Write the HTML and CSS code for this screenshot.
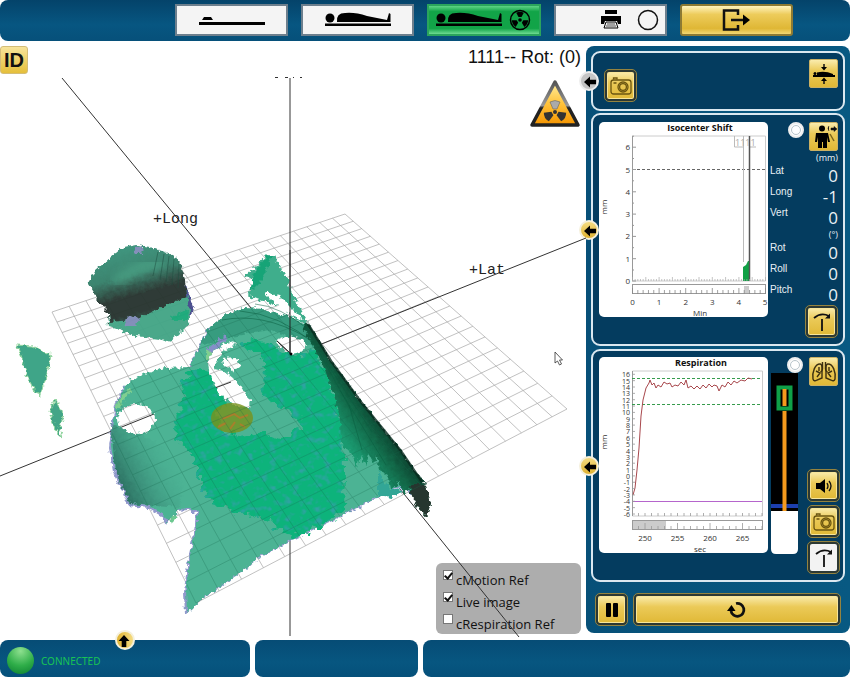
FILE: index.html
```html
<!DOCTYPE html>
<html lang="en">
<head>
<meta charset="utf-8">
<title>Surface monitoring</title>
<link rel="stylesheet" href="styles.css">
</head>
<body>
<svg class="defs" width="0" height="0" aria-hidden="true">
  <symbol id="camera" viewBox="0 0 24 24"><g fill="none" stroke="#6b5510" stroke-width="1.3"><rect x="2" y="6" width="20" height="14" rx="2.5"/><circle cx="14" cy="13" r="5"/><circle cx="14" cy="13" r="3.4"/><path d="M4.500 5.500V4H8v1.500M4.500 9h3"/></g></symbol>
  <symbol id="tilt" viewBox="0 0 24 24"><path d="M4 8Q11 2 19 6M12 9v12" fill="none" stroke="#111" stroke-width="1.800"/><path d="M20 3.500v5h-5z" fill="#111"/></symbol>
  <symbol id="arrow" viewBox="0 0 18 18"><path d="M3 9l6-5.500v3.200h6v4.600H9v3.200z" fill="#000"/></symbol>
  <symbol id="patient" viewBox="0 0 66 16"><circle cx="5" cy="6" r="4.500"/><path d="M12 10Q11 1 20 1Q30 0 42 4L62 8L64 1L65.500 2V10z"/><rect x="0" y="11.500" width="66" height="2.500"/></symbol>
</svg>

<header class="topbar">
  <nav class="steps" aria-label="Workflow">
    <button class="step" aria-label="Empty couch"><svg width="66" height="16" viewBox="0 0 66 16"><path d="M3 8l2-3h7l2 3z"/><rect y="10" width="66" height="3"/></svg></button>
    <button class="step" aria-label="Positioning"><svg width="66" height="16"><use href="#patient"/></svg></button>
    <button class="step step-active" aria-label="Treatment">
      <svg width="66" height="16"><use href="#patient"/></svg>
      <svg width="22" height="22" viewBox="-11 -11 22 22"><circle r="9.500" fill="none" stroke="#000" stroke-width="1.500"/><circle r="1.800"/><g id="blades"><path id="blade" d="M-1.500 -3L-3.800 -7.200Q0 -9.200 3.800 -7.200L1.500 -3z"/><use href="#blade" transform="rotate(120)"/><use href="#blade" transform="rotate(240)"/></g></svg>
    </button>
    <button class="step step-print" aria-label="Report">
      <svg width="22" height="20" viewBox="0 0 22 20"><path d="M5 0h12v4H5zM1 6h20v8h-3l-1-3H5l-1 3H1z"/><path d="M6 12h10l2 6H4z" fill="#eee" stroke="#000"/><path d="M7 14h8M6 16h10" stroke="#555"/></svg>
      <svg width="22" height="22" viewBox="0 0 22 22"><circle cx="11" cy="11" r="9.500" fill="none" stroke="#111" stroke-width="1.500"/></svg>
    </button>
    <button class="step step-gold" aria-label="Exit"><svg width="28" height="22" viewBox="0 0 28 22"><path d="M16 6V1.500H2v19h14V16M9 11h15" fill="none" stroke="#111" stroke-width="2.500"/><path d="M21 5.500l7 5.500-7 5.500z"/></svg></button>
  </nav>
</header>

<main class="work">
  <section class="scene" aria-label="Surface view">
    <svg class="canvas" viewBox="0 42 586 598">
      <defs>
        <filter id="jag" color-interpolation-filters="sRGB" x="-5%" y="-5%" width="110%" height="110%"><feTurbulence type="fractalNoise" baseFrequency=".22" numOctaves="2" seed="4"/><feDisplacementMap in="SourceGraphic" scale="7" xChannelSelector="R" yChannelSelector="G"/></filter>
        <filter id="mottle" color-interpolation-filters="sRGB" x="-5%" y="-5%" width="110%" height="110%">
          <feTurbulence type="fractalNoise" baseFrequency=".13 .16" numOctaves="2" seed="9" result="n"/>
          <feDisplacementMap in="SourceGraphic" in2="n" scale="16" xChannelSelector="R" yChannelSelector="G" result="s"/>
          <feColorMatrix in="n" values="0 0 0 0 .18  0 0 0 0 .64  0 0 0 0 .63  3.500 0 0 0 -1.800" result="b"/>
          <feComposite in="b" in2="s" operator="in" result="c"/>
          <feMerge><feMergeNode in="s"/><feMergeNode in="c"/></feMerge>
        </filter>
        <filter id="soft"><feGaussianBlur stdDeviation="5"/></filter>
        <linearGradient id="head" gradientUnits="userSpaceOnUse" x1="128" y1="245" x2="150" y2="326"><stop offset="0" stop-color="#39927a"/><stop offset=".35" stop-color="#35806a"/><stop offset=".6" stop-color="#27342f"/><stop offset=".8" stop-color="#27342f"/><stop offset="1" stop-color="#32685a"/></linearGradient>
        <linearGradient id="flank" gradientUnits="userSpaceOnUse" x1="345" y1="440" x2="385" y2="412"><stop offset="0" stop-color="#1a9a70"/><stop offset=".5" stop-color="#126848"/><stop offset="1" stop-color="#0a3023"/></linearGradient>
        <linearGradient id="side" gradientUnits="userSpaceOnUse" x1="118" y1="480" x2="175" y2="450"><stop offset="0" stop-color="#2d7263"/><stop offset="1" stop-color="#4ab396" stop-opacity="0"/></linearGradient>
        <mask id="holes" maskUnits="userSpaceOnUse" x="0" y="42" width="586" height="598">
          <rect y="42" width="586" height="598" fill="#fff"/>
          <g filter="url(#jag)">
            <ellipse cx="136" cy="419" rx="19" ry="15"/>
            <path d="M276 341L289 336L302 339L307 346L300 352L291 354L283 350z"/>
            <path d="M208 363Q211 346 234 341L236 344Q222 351 217 360L214 369L224 371L238 382L250 400L249 407L235 406L217 391L210 375z"/>
            <path d="M222 359L236 358L240 367L234 371L223 365z"/>
          </g>
        </mask>
        <path id="torso" d="M190 367L200 345L210 327L225 315L243 308L262 309L285 315L308 326L330 360L360 401L400 450L425 485L420 494L400 486L385 492L360 506L325 523L290 540L260 557L230 580L205 597L187 613L186 590L190 555L196 530L198 511L190 508L180 509L172 516L168 522L163 514L150 506L130 504L125 490L115 470L111 445L114 420L118 400L125 385L140 375L165 368z"/>
      </defs>

      <g id="grid" stroke="#a6a6a6" stroke-width=".7"></g>
      <g stroke="#333" stroke-width="1">
        <path d="M0 476L154 414M319 345L586 238M62 78L256 314M277 341L292 355M400 489L519 637M290 78V354M290 538V636M215 388L231 382"/>
        <path d="M275 77.500h3M285 77.500h3M293 77.500h1M300 77.500h2"/>
      </g>

      <g filter="url(#jag)" opacity=".96">
        <path d="M184 280L195 312L189 316L180 296z" fill="#45498c"/>
        <path d="M108 312L186 290L190 310L188 325L178 335L169 343L160 339L135 336L122 331L109 327z" fill="#43a586"/>
        <path d="M88 283L96 270L110 258L122 248L137 245L150 247L165 252L176 257L182 268L185 280L187 296L165 306L135 320L109 322L108 312L98 302L95 294z" fill="url(#head)"/>
        <path d="M124 322L131 315L139 317L136 326L126 326zM134 247L142 246L143 254L136 254z" fill="#7f8bb8"/>
        <path d="M171 318L188 308L187 320L172 320z" fill="#18a878"/>
        <path d="M17 345L33 346L51 355L48 370L41 395L35 393L25 370L22 358z" fill="#38a284" stroke="#8fd49a"/>
        <path d="M55 399L62 410L63 420L59 428L62 438L57 434L50 415z" fill="#3ca283" stroke="#8fd49a"/>
      </g>
      <path d="M115 283Q138 264 162 264" fill="none" stroke="#55b795" stroke-width="10" filter="url(#soft)" opacity=".5"/>
      <path d="M158 252l-5 24M164 254l-4 26M169 256l-3 26M174 259l-2 26M179 264l-1 24" fill="none" stroke="#1e4d40" opacity=".5"/>

      <g filter="url(#jag)">
        <path d="M244 277L256 266L268 255L274 256L286 276L293 296L310 326L296 320L281 307L262 301L247 295L257 279z" fill="#3fae8c"/>
        <path d="M257 268L268 256L272 256L262 280L251 291L252 281z" fill="#16a477"/>
        <path d="M264 292L279 296L291 308L304 321L291 315L278 306z" fill="#fff"/>
      </g>
      <g mask="url(#holes)">
        <g filter="url(#jag)">
          <use href="#torso" x="-2" y="2" fill="#9199cc"/>
          <path d="M165 509L178 517L171 524z" fill="#6cc890"/>
          <use href="#torso" fill="#4cb394"/>
          <path d="M111 425L150 438L185 465L180 508L130 504L115 470z" fill="url(#side)"/>
          <path d="M200 345L210 327L225 315L243 308L262 309L290 317L312 330L320 350L270 330L225 338z" fill="#2f9376" opacity=".7"/>
          <path d="M118 408Q121 396 131 390M208 360Q207 349 225 339" fill="none" stroke="#7fcf90" stroke-width="4"/>
          <path d="M209 351L226 337" stroke="#858fc8" stroke-width="5"/>
        </g>
        <path filter="url(#mottle)" fill="#0db37b" d="M183 378L200 369L212 374L217 390L226 402L216 412L218 430L240 436L262 433L280 440L302 426L298 418L280 406L262 396L266 375L262 357L240 345L252 339L272 344L284 354L304 355L316 351L326 375L336 400L344 430L345 470L344 510L330 521L292 538L278 530L268 520L240 514L214 504L202 485L194 460L190 452L174 440L176 420L182 400z"/>
      </g>
      <g filter="url(#jag)">
        <path d="M308 322L330 359L360 400L400 449L425 484L431 503L427 517L418 508L409 488L404 496L399 480L392 494L388 474L379 470L377 454L374 464L369 454L366 466L360 456L357 468L350 450L341 446L340 420L335 398L325 370L314 348L303 328z" fill="url(#flank)"/>
        <path d="M410 484L425 484L431 503L427 517L418 508L412 496z" fill="#26362f"/>
        <path d="M378 470L390 490L402 488L392 498L378 496z" fill="#32a696"/>
      </g>
      <path d="M308 324L331 361L361 402L401 451L422 482" fill="none" stroke="#082a1e" stroke-width="2.500" opacity=".8"/>
      <path d="M318 350L352 412M326 362L372 432M335 372L392 450M340 390L386 465M349 405L362 450M255 304Q280 306 309 330M240 311Q280 314 316 345M222 320Q262 312 306 337" fill="none" stroke="#075b3e" opacity=".5"/>
      <ellipse cx="232" cy="418" rx="21" ry="15" fill="#78921c" opacity=".8"/>
      <path d="M222 419l12-5 6 4 8-3M235 422l-5 7M218 427l8-4M240 424l5 3" stroke="#c17429" fill="none" stroke-width="2" opacity=".7"/>
      <clipPath id="torsoClip"><use href="#torso"/></clipPath>
      <g mask="url(#holes)"><g id="mesh" stroke="#18684f" stroke-width=".7" opacity=".4" clip-path="url(#torsoClip)"></g></g>
      <path d="M290 250V354M277 341L292 355" stroke="#222"/>
      <circle cx="291" cy="354" r="1.500"/>
      <g class="axis-label"><text x="153" y="223">+Long</text><text x="469" y="274">+Lat</text></g>
      <path d="M555 352v11l2.500-2 2 4 2-1-2-4h3z" fill="#fff" stroke="#333" stroke-width=".8"/>
    </svg>

    <div class="overlay">
      <div class="scene-top">
        <button class="id-button">ID</button>
        <div class="status">
          <h1 class="reading">1111-- Rot: (0)</h1>
          <svg class="warning" width="52" height="50" viewBox="0 0 52 50" role="img" aria-label="Radiation"><defs><linearGradient id="warn" x1="0" y1="0" x2="0" y2="1"><stop offset="0" stop-color="#fff0a0"/><stop offset=".5" stop-color="#ffc33c"/><stop offset="1" stop-color="#f49400"/></linearGradient><linearGradient id="rim" x1="0" y1="0" x2="0" y2="1"><stop offset="0" stop-color="#555"/><stop offset=".55" stop-color="#999"/><stop offset=".6" stop-color="#222"/><stop offset="1" stop-color="#222"/></linearGradient></defs><path d="M26 3L49 46H3z" fill="url(#warn)" stroke="url(#rim)" stroke-width="3.500" stroke-linejoin="round"/><g transform="translate(26 33)" fill="#333"><circle r="2"/><path d="M-2-3L-5-10Q0-13 5-10L2-3z" fill="#aaa" stroke="#555" stroke-width=".5"/><path d="M-2-3L-5-10Q0-13 5-10L2-3z" transform="rotate(120)"/><path d="M-2-3L-5-10Q0-13 5-10L2-3z" transform="rotate(240)"/></g></svg>
        </div>
      </div>
      <fieldset class="layers">
        <label><input type="checkbox" checked>cMotion Ref</label>
        <label><input type="checkbox" checked>Live image</label>
        <label><input type="checkbox">cRespiration Ref</label>
      </fieldset>
    </div>
  </section>

  <aside class="panel">
    <section class="box box-capture">
      <button class="round round-grey" aria-label="Collapse capture"><svg width="18" height="18"><use href="#arrow"/></svg></button>
      <button class="icon framed" aria-label="Capture"><svg width="24" height="24"><use href="#camera"/></svg></button>
      <button class="icon" aria-label="Couch height"><svg width="26" height="26" viewBox="0 0 26 26"><path d="M2 14h22v2H2zM6 11.500q8-2 16 1.500v1H6z"/><circle cx="4" cy="12.500" r="1.500"/><path d="M13 3v5M13 23v-5" stroke="#111" stroke-width="1.500"/><path d="M10 6h6l-3 3.500zM10 20h6l-3-3.500z"/></svg></button>
    </section>

    <section class="box box-shift">
      <button class="round" aria-label="Collapse shift"><svg width="18" height="18"><use href="#arrow"/></svg></button>
      <figure class="card">
        <svg class="chart" id="shift" viewBox="599 122 169 195" role="img" aria-label="Isocenter shift">
          <text class="title" x="700" y="131">Isocenter Shift</text>
          <path d="M632.500 136V281H765.500V136z" fill="none" stroke="#ccc"/>
          <path d="M632.500 136V281" stroke="#999"/>
          <path d="M632 169.500H765" stroke="#666" stroke-dasharray="3 2"/>
          <path d="M743.500 136V262M734.500 136V147H743M749.500 136V147H756" stroke="#bbb" fill="none"/>
          <path d="M743 281V267L746 265L748 261H750V281z" fill="#11a045"/>
          <path d="M749.500 136V281" stroke="#555" stroke-width="1.500"/>
          <text class="ghost" x="735" y="146">1111</text>
          <rect x="632.500" y="284.500" width="133" height="9" fill="#fff" stroke="#999"/>
          <rect x="744" y="286" width="5" height="7" fill="#ccc"/>
          <g class="ticks"></g>
          <text x="700" y="316">Min</text>
          <text class="unit" transform="translate(607 207) rotate(-90)">mm</text>
        </svg>
      </figure>
      <div class="shift-side">
        <div class="pick"><input class="dot" type="radio" name="source" aria-label="Track isocenter"><button class="icon" aria-label="Patient motion"><svg width="26" height="26" viewBox="0 0 26 26"><circle cx="11" cy="4.500" r="3"/><path d="M5 9h12l2 9h-2l-1-5v11h-4v-6h-1v6H7V13l-1 5H4z"/><path d="M18 2q-2 2 0 5M23 2.500l3 2.500-3 2.500zM20 4v2h3V4z" stroke="#111" fill="#111" stroke-width=".5"/><path d="M19 10l4 7" stroke="#7a631b" stroke-width="1.500"/></svg></button></div>
        <table class="values">
          <tbody>
            <tr class="unit-row"><th></th><td>(mm)</td></tr>
            <tr><th scope="row">Lat</th><td>0</td></tr>
            <tr><th scope="row">Long</th><td>-1</td></tr>
            <tr><th scope="row">Vert</th><td>0</td></tr>
            <tr class="unit-row"><th></th><td>(°)</td></tr>
            <tr><th scope="row">Rot</th><td>0</td></tr>
            <tr><th scope="row">Roll</th><td>0</td></tr>
            <tr><th scope="row">Pitch</th><td>0</td></tr>
          </tbody>
        </table>
        <button class="icon framed" aria-label="Apply shift"><svg width="24" height="24"><use href="#tilt"/></svg></button>
      </div>
    </section>

    <section class="box box-resp">
      <button class="round" aria-label="Collapse respiration"><svg width="18" height="18"><use href="#arrow"/></svg></button>
      <figure class="card">
        <svg class="chart" id="resp" viewBox="599 357 169 196" role="img" aria-label="Respiration">
          <text class="title" x="701" y="366">Respiration</text>
          <path d="M632.500 371V516H762.500V371z" fill="none" stroke="#ccc"/>
          <path d="M632.500 371V516" stroke="#999"/>
          <path d="M632 378.500H762M632 404.500H762" stroke="#369b4d" stroke-dasharray="3 2"/>
          <path d="M633 501.500H762" stroke="#b565cc"/>
          <path d="M633 495L635 488L637 470L639 448L641 416L643 400L646 388L649 383L650 380L652 385L654 383L656 388L658 385L661 387L664 382L667 384L670 383L672 387L675 385L678 386L681 382L684 385L686 380L688 388L691 386L694 389L697 386L700 389L703 385L706 388L709 384L712 387L714 385L717 386L719 391L722 385L725 387L728 382L731 385L734 381L737 383L741 380L745 381L748 378L752 379" fill="none" stroke="#a8474c" stroke-linejoin="round"/>
          <rect x="632.500" y="520.500" width="130" height="9" fill="#fff" stroke="#999"/>
          <rect x="633" y="521" width="33" height="8" fill="#ccc"/>
          <g class="ticks"></g>
          <text x="700" y="552">sec</text>
          <text class="unit" transform="translate(607 442) rotate(-90)">mm</text>
        </svg>
      </figure>
      <div class="gauge-col">
        <input class="dot" type="radio" name="source" aria-label="Track respiration">
        <svg class="gauge" width="27" height="181" viewBox="0 0 27 181" role="img" aria-label="Respiration level"><path d="M0 0H27V138H0z"/><path d="M0 138H27V176Q27 181 22 181H5Q0 181 0 176z" fill="#fff"/><rect y="131" width="27" height="4" fill="#1c3fae"/><rect x="7.500" y="14.500" width="12" height="21" fill="#000" stroke="#0fa048" stroke-width="4"/><path d="M13.500 16V33M13.500 38V138" stroke="#f59a1d" stroke-width="4"/></svg>
      </div>
      <div class="resp-side">
        <button class="icon" aria-label="Respiration"><svg width="26" height="26" viewBox="0 0 26 26"><g fill="none" stroke="#3c3010" stroke-width="1.400"><path d="M11.500 3v7q0 2-2 3M14.500 3v7q0 2 2 3"/><path d="M9 5C4 5 1 13 2 20q1 3 4 1l5-2V9q0-4-2-4zM17 5c5 0 8 8 7 15q-1 3-4 1l-5-2V9q0-4 2-4z"/><path d="M5 12l4 2-3 4M8 8v4M21 12l-4 2 3 4M18 8v4"/></g></svg></button>
        <button class="icon framed" aria-label="Sound"><svg width="20" height="20" viewBox="0 0 20 20"><path d="M2 7h4l5-4v14l-5-4H2z"/><path d="M13 7q2 3 0 6M15 5q4 5 0 10" fill="none" stroke="#111" stroke-width="1.300"/></svg></button>
        <button class="icon framed" aria-label="Capture breathing"><svg width="24" height="24"><use href="#camera"/></svg></button>
        <button class="icon framed icon-white" aria-label="Reset baseline"><svg width="24" height="24"><use href="#tilt"/></svg></button>
      </div>
    </section>

    <div class="actions">
      <button class="icon framed" aria-label="Pause"><svg width="14" height="14" viewBox="0 0 14 14"><rect x="1" width="5" height="14" rx="1"/><rect x="8" width="5" height="14" rx="1"/></svg></button>
      <button class="icon framed restart" aria-label="Restart"><svg width="20" height="20" viewBox="0 0 20 20"><path d="M9 3.500A6.500 6.500 0 1 1 4 11" fill="none" stroke="#111" stroke-width="2.800"/><path d="M0 11l4.500-6 4 6z"/></svg></button>
    </div>
  </aside>
</main>

<footer class="bottombar">
  <section class="bar bar-status"><button class="round round-up" aria-label="Expand"><svg width="18" height="18"><use href="#arrow"/></svg></button><span class="lamp"></span><span class="state">CONNECTED</span></section>
  <section class="bar"></section>
  <section class="bar"></section>
</footer>
<script src="plot.js"></script>
</body>
</html>
```
FILE: styles.css
```css
* { box-sizing: border-box; }
body {
  margin: 0;
  min-height: 100vh;
  display: flex;
  flex-direction: column;
  background: #fff;
  font-family: "Open Sans", "Noto Sans", sans-serif;
  color: #111;
}
button { padding: 0; font: inherit; color: inherit; cursor: pointer; }
svg { display: block; flex: none; }
.defs { position: absolute; }

.topbar {
  height: 41px;
  padding: 4px 57px 5px 175px;
  border-radius: 8px;
  background: linear-gradient(#04436a, #075681 60%, #06507a);
}
.steps { display: grid; grid-template-columns: repeat(5, minmax(0, 1fr)); gap: 13px; height: 100%; }
.step {
  display: flex;
  align-items: center;
  justify-content: center;
  gap: 7px;
  border: 2px solid #6d7f8d;
  background: #f4f4f4;
}
.step-active { border-color: #2ba45c; background: linear-gradient(#5ed286, #12a448 20%, #12a448 80%, #6edb92); }
.step-print { justify-content: flex-end; gap: 15px; padding-right: 6px; }
.step-gold { border-color: #8d7a33; border-radius: 3px; background: linear-gradient(#fff3bd, #edcc5b 30%, #dfb735 80%, #f2d774); }

.work { flex: 1; display: grid; grid-template-columns: minmax(0, 1fr) 264px; align-items: start; }
.scene { display: grid; margin-top: 1px; }
.canvas, .overlay { grid-area: 1 / 1; }
.canvas { width: 100%; z-index: 1; pointer-events: none; }
.axis-label { font: 15px "Liberation Mono", monospace; fill: #222; }
.overlay { display: flex; flex-direction: column; justify-content: space-between; align-items: flex-end; padding: 4px 5px 6px 0; }
.scene-top { display: flex; justify-content: space-between; align-self: stretch; }
.id-button {
  width: 28px;
  height: 28px;
  border: 1px solid #d3bd78;
  border-radius: 3px;
  background: linear-gradient(#f7e49b, #e5bf3a);
  font: bold 20px/24px "Liberation Sans", sans-serif;
}
.status { display: flex; flex-direction: column; align-items: flex-end; gap: 11px; }
.reading { margin: 0; font: 18px/22px "Liberation Sans", sans-serif; }
.layers {
  display: flex;
  flex-direction: column;
  width: 145px;
  margin: 0;
  padding: 5px 7px 0;
  border: 0;
  border-radius: 6px;
  background: #adadad;
  font-size: 13px;
  line-height: 22px;
}
.layers label { display: flex; gap: 3px; height: 22px; padding-top: 1px; white-space: nowrap; }
.layers input {
  appearance: none;
  width: 10px;
  height: 10px;
  margin: 1px 0 0;
  border: 1px solid #777;
  background: #fff;
}
.layers input:checked::before { content: ""; display: block; width: 3px; height: 6px; margin: 0 2px; border: solid #111; border-width: 0 2px 2px 0; transform: rotate(40deg); }

.panel {
  margin-top: 5px;
  padding: 5px 5px 7px;
  border-radius: 8px;
  background: linear-gradient(90deg, #075078, #085982);
}
.box {
  position: relative;
  display: flex;
  border: 2px solid #dbe8f0;
  border-radius: 9px;
  background: #043c5f;
}
.box-capture { height: 60px; margin-bottom: 2px; padding: 6px 5px 5px 11px; justify-content: space-between; align-items: flex-start; }
.box-capture .framed { margin-top: 11px; }
.box-shift { height: 233px; margin-bottom: 3px; padding: 7px 5px 0 6px; gap: 2px; }
.box-resp { height: 233px; padding: 6px 2px 0 6px; gap: 3px; }

.round {
  position: absolute;
  left: -14px;
  top: 50%;
  display: grid;
  place-items: center;
  width: 20px;
  height: 20px;
  margin-top: -10px;
  border: 2px solid #f5f0dc;
  border-radius: 50%;
  background: linear-gradient(#f5dc83, #dfb230);
}
.round-grey { border-color: #eee; background: #c5c5c5; }
.icon {
  display: grid;
  place-items: center;
  flex: none;
  width: 29px;
  height: 29px;
  border: 1px solid #cbb164;
  border-radius: 2px;
  background: linear-gradient(#faecad, #ebca58 40%, #e0b836);
}
.framed { width: 31px; height: 31px; margin: 1px; border: 2px solid #2c3833; outline: 1px solid #94833f; border-radius: 4px; box-shadow: inset 0 0 0 1px #f7e59a; }
.icon-white { background: #f3f3f3; box-shadow: none; }
.dot { appearance: none; width: 16px; height: 16px; margin: 0; border: 2px solid #eee; outline: 1px solid #b9c4ca; outline-offset: -4px; border-radius: 50%; background: #fff; }

.card { flex: none; width: 169px; align-self: flex-start; margin: 0; border-radius: 5px; background: #fff; overflow: hidden; }
.chart { width: 100%; }
.chart text { font: 8px "Open Sans", sans-serif; fill: #333; text-anchor: middle; }
.chart .title { font-size: 9px; font-weight: bold; fill: #111; }
.chart .y { text-anchor: end; }
#resp .y { font-size: 7px; }
.chart .ghost { font-size: 9px; fill: #aaa; text-anchor: start; }

.shift-side { flex: 1; display: flex; flex-direction: column; align-items: flex-end; }
.pick { display: flex; align-items: flex-start; gap: 5px; }
.values { width: 100%; border-collapse: collapse; color: #e9f1f5; }
.values th, .values td { padding: 0; height: 21px; }
.values th { vertical-align: top; text-align: left; font: 10px/11px "Liberation Sans", sans-serif; }
.values td { text-align: right; font-size: 17px; line-height: 21px; }
.values .unit-row td, .values .unit-row th { height: 14px; font-size: 9px; line-height: 14px; }
.gauge-col { display: flex; flex-direction: column; width: 32px; }
.gauge-col .dot { align-self: flex-end; }
.resp-side { flex: 1; display: flex; flex-direction: column; align-items: center; gap: 3px; }
.resp-side .icon:first-child { margin-bottom: 80px; }

.actions { display: flex; gap: 5px; padding: 11px 4px 0 4px; }
.actions .restart { flex: 1; }

.bottombar { display: grid; grid-template-columns: 250fr 163fr 427fr; gap: 5px; }
.bar { position: relative; display: flex; align-items: center; height: 37px; border-radius: 8px; background: linear-gradient(#064c75, #075680 60%, #05507a); }
.bar-status { gap: 7px; padding: 4px 7px 0; }
.lamp { width: 27px; height: 27px; border-radius: 50%; background: radial-gradient(circle at 50% 15%, #8ee08f, #2fae49 55%, #0b7d30); }
.state { font: 10px "Noto Sans", sans-serif; color: #19c354; }
.round-up { left: 50%; top: 0; margin-left: -10px; transform: rotate(90deg); }
```
FILE: plot.js
```js
const NS = "http://www.w3.org/2000/svg";

function add(parent, name, attrs, text) {
  const node = document.createElementNS(NS, name);
  for (const key in attrs) node.setAttribute(key, attrs[key]);
  if (text !== undefined) node.textContent = text;
  parent.appendChild(node);
}

// Projects the unit square on the floor quad.
function projector([p0, p1, p2, p3]) {
  const dx1 = p1[0] - p2[0], dx2 = p3[0] - p2[0], sx = p0[0] - p1[0] + p2[0] - p3[0];
  const dy1 = p1[1] - p2[1], dy2 = p3[1] - p2[1], sy = p0[1] - p1[1] + p2[1] - p3[1];
  const det = dx1 * dy2 - dx2 * dy1;
  const g = (sx * dy2 - dx2 * sy) / det, h = (dx1 * sy - sx * dy1) / det;
  return (u, v) => {
    const w = g * u + h * v + 1;
    return [0, 1].map(i => ((p1[i] - p0[i] + g * p1[i]) * u + (p3[i] - p0[i] + h * p3[i]) * v + p0[i]) / w);
  };
}

const at = projector([[52, 312], [345, 214], [567, 409], [196, 603]]);
const cells = 20;
for (const id of ["grid", "mesh"]) {
  const layer = document.getElementById(id);
  for (let i = 0; i <= cells; i++) {
    const t = i / cells;
    for (const [a, b] of [[at(t, 0), at(t, 1)], [at(0, t), at(1, t)]]) {
      add(layer, "path", { d: `M${a}L${b}` });
    }
  }
}

const shift = document.querySelector("#shift .ticks");
for (let n = 0; n <= 6; n++) {
  const y = 281 - n * 22.3;
  add(shift, "text", { class: "y", x: 630, y: y + 3 }, n);
  add(shift, "path", { d: `M632 ${y}h4M632 ${y - 11}h2`, stroke: "#999" });
}
for (let n = 0; n <= 50; n++) {
  const x = 632.5 + n * 2.66;
  add(shift, "path", { d: `M${x} 281v${n % 5 ? -2 : -4}`, stroke: "#aaa", "stroke-width": 0.7 });
  if (n % 2 === 0) add(shift, "path", { d: `M${x} 294v${n % 10 ? -4 : -6}`, stroke: "#888", "stroke-width": 0.8 });
  if (n % 10 === 0) add(shift, "text", { x: Math.min(x, 765), y: 305 }, n / 10);
}

const resp = document.querySelector("#resp .ticks");
for (let n = -6; n <= 16; n++) {
  const y = 514 - (n + 6) * 6.35;
  add(resp, "text", { class: "y", x: 630, y: y + 3 }, n);
  add(resp, "path", { d: `M632 ${y}h3`, stroke: "#999", "stroke-width": 0.8 });
}
for (let n = 249; n <= 268; n++) {
  const x = 645 + (n - 250) * 6.5;
  add(resp, "path", { d: `M${x} 516v-3M${x} 530v${n % 5 ? -4 : -7}`, stroke: "#999", "stroke-width": 0.8 });
  if (n % 5 === 0) add(resp, "text", { x, y: 541 }, n);
}
```
